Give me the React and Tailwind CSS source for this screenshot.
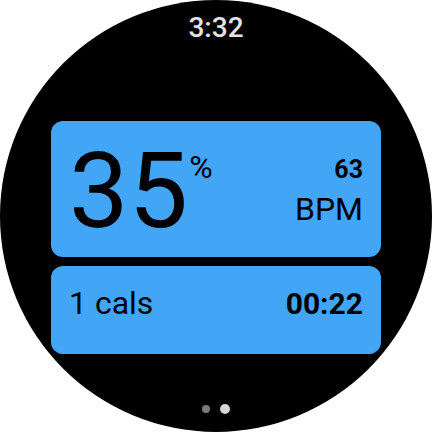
export default function App() {
  const font = { fontFamily: "Roboto, 'Noto Sans', sans-serif" };
  return (
    <div className="w-[432px] h-[432px] bg-white" style={font}>
      <div className="w-[432px] h-[432px] rounded-full bg-black flex flex-col items-center">
        <div className="mt-[13px] text-[28px] leading-[29px] font-medium text-[#e3e3e3]">3:32</div>
        <div className="mt-[79px] w-[330px] h-[136px] rounded-[12px] bg-[#42a5f5] flex justify-between items-start px-[18px] text-black">
          <div className="flex items-start pt-[17px]">
            <span className="text-[106px] leading-none">35</span>
            <span className="text-[32px] leading-none mt-[13px] ml-[1px]">%</span>
          </div>
          <div className="flex flex-col items-end pt-[36px]">
            <span className="text-[25px] leading-none font-bold">63</span>
            <span className="text-[32px] leading-none mt-[11px]">BPM</span>
          </div>
        </div>
        <div className="mt-[9px] w-[330px] h-[88px] rounded-[12px] bg-[#42a5f5] flex justify-between items-baseline px-[18px] pt-[21px] text-black">
          <span className="text-[32px] leading-none">1 cals</span>
          <span className="text-[30px] leading-none font-bold">00:22</span>
        </div>
        <div className="mt-[50px] flex items-center gap-[10px] h-[10px]">
          <div className="w-[8px] h-[8px] rounded-full bg-[#7a7a7a]"></div>
          <div className="w-[10px] h-[10px] rounded-full bg-[#d6d6d6]"></div>
        </div>
      </div>
    </div>
  );
}
